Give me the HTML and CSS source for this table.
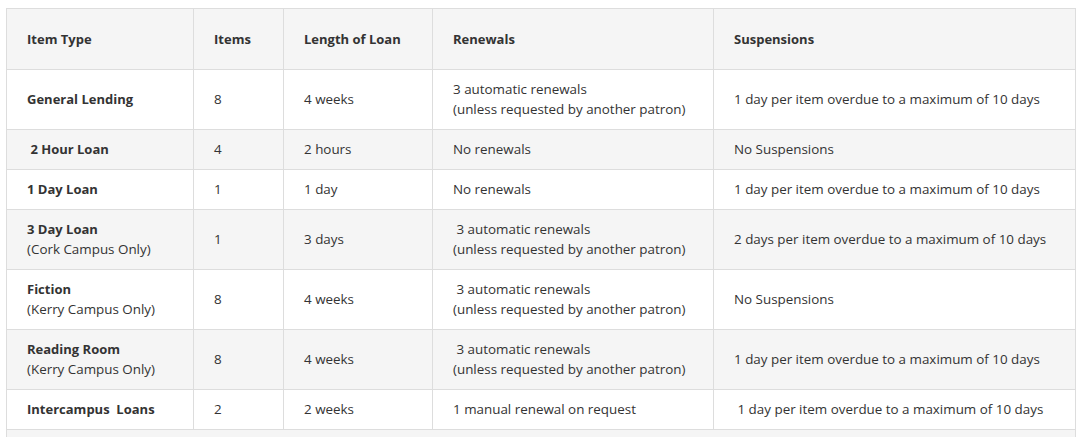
FILE: index.html
```html
<!DOCTYPE html>
<html lang="en">
<head>
<meta charset="utf-8">
<title>Loan Periods</title>
<link rel="stylesheet" href="styles.css">
</head>
<body>
<div class="wrap">
<table class="loans">
<colgroup>
<col class="c1"><col class="c2"><col class="c3"><col class="c4"><col class="c5">
</colgroup>
<thead>
<tr><th>Item Type</th><th>Items</th><th>Length of Loan</th><th>Renewals</th><th>Suspensions</th></tr>
</thead>
<tbody>
<tr><td><b>General Lending</b></td><td>8</td><td>4 weeks</td><td>3 automatic renewals<br>(unless requested by another patron)</td><td>1 day per item overdue to a maximum of 10 days</td></tr>
<tr><td><b>&nbsp;2 Hour Loan</b></td><td>4</td><td>2 hours</td><td>No renewals</td><td>No Suspensions</td></tr>
<tr><td><b>1 Day Loan</b></td><td>1</td><td>1 day</td><td>No renewals</td><td>1 day per item overdue to a maximum of 10 days</td></tr>
<tr><td><b>3 Day Loan</b><br>(Cork Campus Only)</td><td>1</td><td>3 days</td><td>&nbsp;3 automatic renewals<br>(unless requested by another patron)</td><td>2 days per item overdue to a maximum of 10 days</td></tr>
<tr><td><b>Fiction</b><br>(Kerry Campus Only)</td><td>8</td><td>4 weeks</td><td>&nbsp;3 automatic renewals<br>(unless requested by another patron)</td><td>No Suspensions</td></tr>
<tr><td><b>Reading Room</b><br>(Kerry Campus Only)</td><td>8</td><td>4 weeks</td><td>&nbsp;3 automatic renewals<br>(unless requested by another patron)</td><td>1 day per item overdue to a maximum of 10 days</td></tr>
<tr><td><b>Intercampus &nbsp;Loans</b></td><td>2</td><td>2 weeks</td><td>1 manual renewal on request</td><td>&nbsp;1 day per item overdue to a maximum of 10 days</td></tr>
<tr class="tail"><td colspan="5">&nbsp;</td></tr>
</tbody>
</table>
</div>
</body>
</html>
```
FILE: styles.css
```css
html, body {
  margin: 0;
  padding: 0;
  background: #ffffff;
}
.wrap {
  padding: 8px 6px 0 6px;
}
.loans {
  border-collapse: collapse;
  table-layout: fixed;
  width: 1069px;
  font-family: "Open Sans", "Liberation Sans", sans-serif;
  font-size: 13.4px;
  line-height: 20px;
  color: #333333;
}
.c1 { width: 187px; }
.c2 { width: 90px; }
.c3 { width: 149px; }
.c4 { width: 281px; }
.c5 { width: 362px; }
.loans th,
.loans td {
  border: 1px solid #dddddd;
  text-align: left;
  vertical-align: middle;
  padding: 9px 20px 10px 20px;
  white-space: nowrap;
}
.loans th {
  font-weight: 700;
  font-size: 13px;
  padding-top: 20px;
  padding-bottom: 20px;
}
.loans thead tr {
  background: #f5f5f5;
}
.loans tbody tr:nth-child(even) {
  background: #f5f5f5;
}
.loans b {
  font-weight: 700;
  font-size: 13px;
}
```
